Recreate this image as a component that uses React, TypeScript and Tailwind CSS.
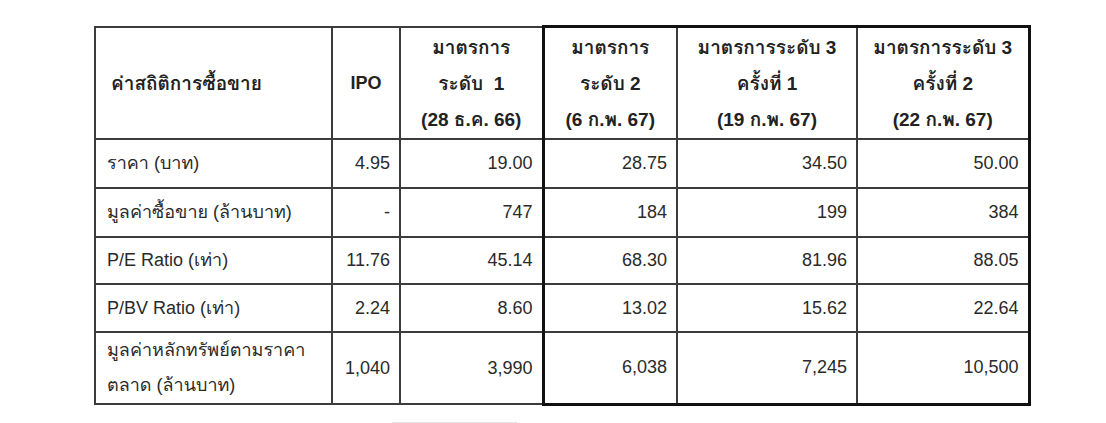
const headers = [
  { lines: ['มาตรการ', 'ระดับ  1', '(28 ธ.ค. 66)'] },
  { lines: ['มาตรการ', 'ระดับ 2', '(6 ก.พ. 67)'] },
  { lines: ['มาตรการระดับ 3', 'ครั้งที่ 1', '(19 ก.พ. 67)'] },
  { lines: ['มาตรการระดับ 3', 'ครั้งที่ 2', '(22 ก.พ. 67)'] },
];

const rows = [
  { label: ['ราคา (บาท)'], values: ['4.95', '19.00', '28.75', '34.50', '50.00'], h: 'h-[49px]' },
  { label: ['มูลค่าซื้อขาย (ล้านบาท)'], values: ['-', '747', '184', '199', '384'], h: 'h-[49px]' },
  { label: ['P/E Ratio (เท่า)'], values: ['11.76', '45.14', '68.30', '81.96', '88.05'], h: 'h-[47px]' },
  { label: ['P/BV Ratio (เท่า)'], values: ['2.24', '8.60', '13.02', '15.62', '22.64'], h: 'h-[48px]' },
  {
    label: ['มูลค่าหลักทรัพย์ตามราคา', 'ตลาด (ล้านบาท)'],
    values: ['1,040', '3,990', '6,038', '7,245', '10,500'],
    h: 'h-[69px]',
  },
];

// value columns 2..4 (the three right-hand ones) sit inside the heavy box
function boxClass(vi: number, last: boolean, top: boolean) {
  const c: string[] = [];
  if (vi === 2) c.push('border-l-[3px] border-l-[#111]');
  if (vi === 4) c.push('border-r-[3px] border-r-[#111]');
  if (vi >= 2 && last) c.push('border-b-[3px] border-b-[#111]');
  if (vi >= 2 && top) c.push('border-t-[3px] border-t-[#111]');
  return c.join(' ');
}

export default function App() {
  return (
    <div
      className="w-[1106px] h-[423px] bg-white text-[#222] pl-[94px] pt-[25px] overflow-hidden"
      style={{
        fontFamily:
          '"Liberation Sans", Arial, Tahoma, Loma, Garuda, "Noto Sans Thai Looped", "Noto Sans Thai", sans-serif',
      }}
    >
      <table className="table-fixed border-collapse w-[936px] text-[18px]">
        <colgroup>
          <col className="w-[237px]" />
          <col className="w-[68px]" />
          <col className="w-[143px]" />
          <col className="w-[134px]" />
          <col className="w-[180px]" />
          <col className="w-[172px]" />
        </colgroup>
        <thead>
          <tr className="h-[112px]">
            <th className="border-2 border-[#3c3c3c] text-left text-[19px] font-bold pl-[15px] pt-[2px] align-middle">
              ค่าสถิติการซื้อขาย
            </th>
            <th className="border-2 border-[#3c3c3c] text-center text-[18px] font-bold pt-[2px] align-middle">IPO</th>
            {headers.map((h, i) => (
              <th
                key={i}
                className={`border-2 border-[#3c3c3c] text-center text-[19px] font-bold align-middle pt-[2px] leading-[36px] ${boxClass(i + 1, false, true)}`}
              >
                {h.lines.map((l, j) => (
                  <div key={j} className="whitespace-pre">
                    {l}
                  </div>
                ))}
              </th>
            ))}
          </tr>
        </thead>
        <tbody>
          {rows.map((r, ri) => {
            const last = ri === rows.length - 1;
            return (
              <tr key={ri} className={r.h}>
                <td className="border-2 border-[#3c3c3c] pl-[11px] align-middle leading-[35px] text-[#2a2a2a]">
                  {r.label.map((l, j) => (
                    <div key={j}>{l}</div>
                  ))}
                </td>
                {r.values.map((v, vi) => (
                  <td
                    key={vi}
                    className={`border-2 border-[#3c3c3c] text-right pr-[9px] align-middle text-[#2a2a2a] ${boxClass(vi, last, false)}`}
                  >
                    {v}
                  </td>
                ))}
              </tr>
            );
          })}
        </tbody>
      </table>
      <div className="ml-[298px] mt-[16px] w-[125px] h-[2px] bg-[#e6e6e6]" />
    </div>
  );
}
